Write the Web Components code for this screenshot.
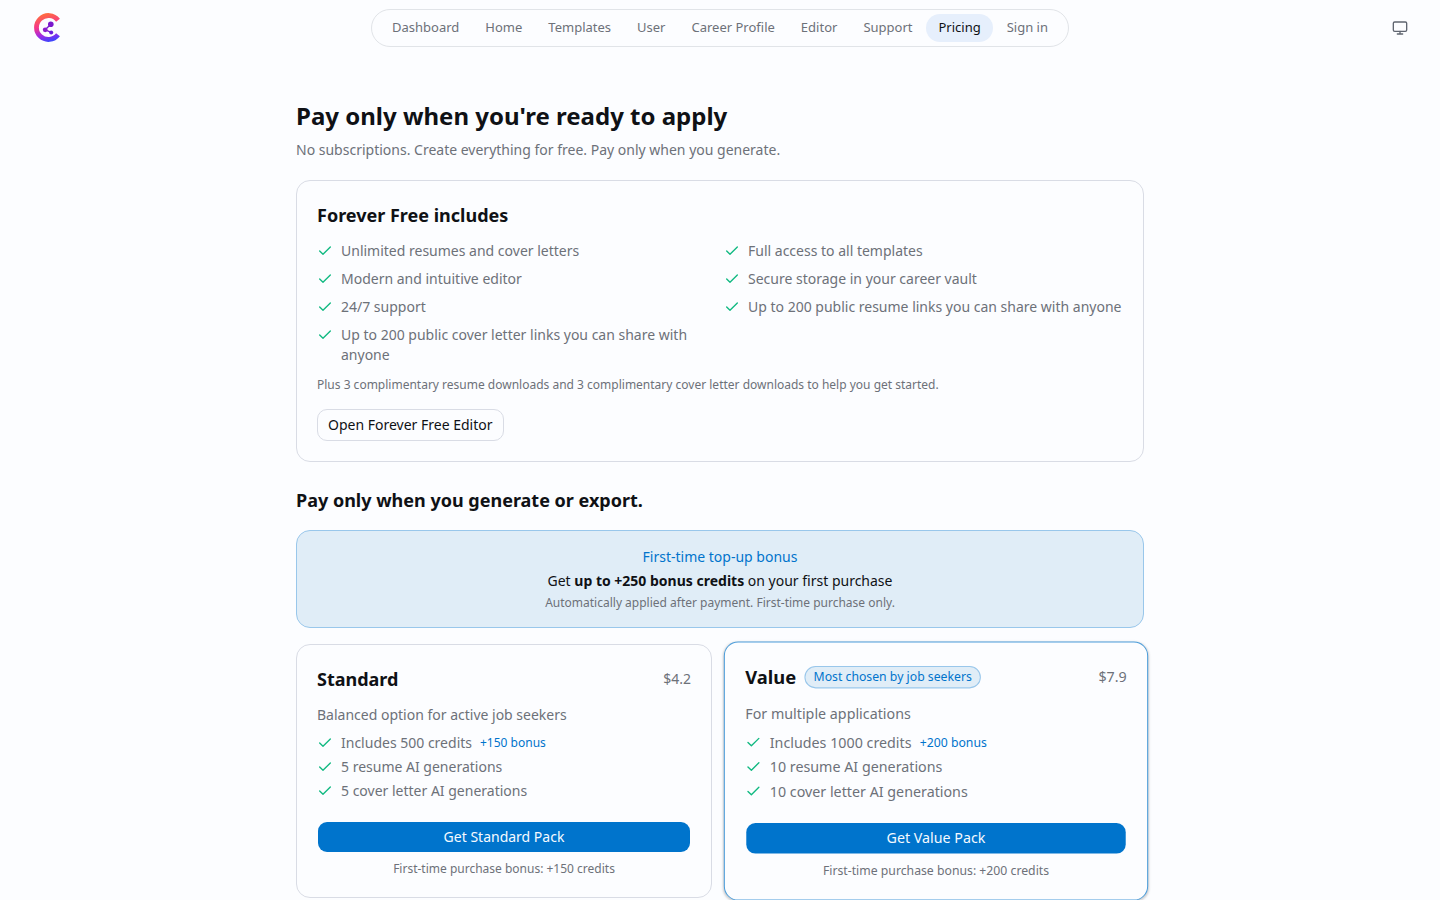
<!DOCTYPE html>
<html lang="en">
<head>
<meta charset="utf-8">
<meta name="viewport" content="width=device-width, initial-scale=1">
<title>Pricing</title>
<style>
    :root {
        --bg: #fcfdff;
        --text: #0f1115;
        --muted: #6d7179;
        --border: #d9dce5;
        --primary: #0074cc;
        --primary-soft: #e0edf7;
        --primary-line: #99c7eb;
        --success: #10b981;
    }

    body {
        margin: 0;
        background: var(--bg);
        color: var(--text);
        font: 14px/20px "Noto Sans", sans-serif;
    }
</style>
</head>
<body>
<site-header>
    <nav-link href="#dashboard">Dashboard</nav-link>
    <nav-link href="#home">Home</nav-link>
    <nav-link href="#templates">Templates</nav-link>
    <nav-link href="#user">User</nav-link>
    <nav-link href="#career-profile">Career Profile</nav-link>
    <nav-link href="#editor">Editor</nav-link>
    <nav-link href="#support">Support</nav-link>
    <nav-link href="#pricing" active>Pricing</nav-link>
    <nav-link href="#sign-in">Sign in</nav-link>
</site-header>

<pricing-page>
    <free-plan slot="free">
        <check-item>Unlimited resumes and cover letters</check-item>
        <check-item>Full access to all templates</check-item>
        <check-item>Modern and intuitive editor</check-item>
        <check-item>Secure storage in your career vault</check-item>
        <check-item>24/7 support</check-item>
        <check-item>Up to 200 public resume links you can share with anyone</check-item>
        <check-item>Up to 200 public cover letter links you can share with anyone</check-item>
    </free-plan>
    <bonus-banner slot="bonus"></bonus-banner>
    <price-card name="Standard" price="$4.2" bonus="150">
        <span slot="description">Balanced option for active job seekers</span>
        <check-item bonus="+150 bonus">Includes 500 credits</check-item>
        <check-item>5 resume AI generations</check-item>
        <check-item>5 cover letter AI generations</check-item>
    </price-card>
    <price-card name="Value" price="$7.9" bonus="200" badge="Most chosen by job seekers" featured>
        <span slot="description">For multiple applications</span>
        <check-item bonus="+200 bonus">Includes 1000 credits</check-item>
        <check-item>10 resume AI generations</check-item>
        <check-item>10 cover letter AI generations</check-item>
    </price-card>
</pricing-page>

<script>
class NavLink extends HTMLElement {
    constructor() {
        super()
        this.attachShadow({ mode: "open" })
    }

    connectedCallback() {
        this.shadowRoot.innerHTML = `
        <style>
            :host {
                display: block;
            }

            a {
                display: block;
                padding: 4px 12px 5px;
                border-radius: 14px;
                color: var(--muted);
                font-size: 13px;
                line-height: 19px;
                text-decoration: none;
                white-space: nowrap;
            }

            :host([active]) a {
                background: #e6effc;
                color: var(--text);
            }
        </style>
        <a href="${this.getAttribute("href")}" ${this.hasAttribute("active") ? 'aria-current="page"' : ""}><slot></slot></a>
        `
    }
}
customElements.define("nav-link", NavLink)

class SiteHeader extends HTMLElement {
    constructor() {
        super()
        this.attachShadow({ mode: "open" })
        this.shadowRoot.innerHTML = `
        <style>
            :host {
                display: block;
            }

            header {
                display: grid;
                grid-template-columns: 1fr auto 1fr;
                align-items: center;
                min-height: 56px;
                padding: 0 32px;
            }

            .logo {
                justify-self: start;
            }

            svg {
                display: block;
            }

            nav {
                display: flex;
                gap: 2px;
                padding: 4px 8px;
                border: 1px solid #e1e4e8;
                border-radius: 19px;
            }

            button {
                justify-self: end;
                padding: 0;
                border: 0;
                background: none;
                color: #5f6570;
                cursor: pointer;
            }
        </style>
        <header>
            <a class="logo" href="#" aria-label="Home page">
                <svg width="32" height="32" viewBox="0 0 32 32" fill="none">
                    <defs>
                        <linearGradient id="ring" x1="13" y1="2" x2="20" y2="30" gradientUnits="userSpaceOnUse">
                            <stop offset="0" stop-color="#ff6b40"/>
                            <stop offset=".4" stop-color="#f5368a"/>
                            <stop offset=".72" stop-color="#9a2be8"/>
                            <stop offset="1" stop-color="#2f48ff"/>
                        </linearGradient>
                    </defs>
                    <path d="M26 8.2A12 12 0 1 0 26 22.8" stroke="url(#ring)" stroke-width="4.8"/>
                    <path d="M18.8 12.3 13.2 17.8l6 2.6" stroke="#7a18cc" stroke-width="1.4"/>
                    <circle cx="18.8" cy="12.3" r="2.8" fill="#7a18cc"/>
                    <circle cx="13.2" cy="17.8" r="2.4" fill="#8a1ccc"/>
                    <circle cx="19.2" cy="20.4" r="2" fill="#6a1cdc"/>
                </svg>
            </a>
            <nav><slot></slot></nav>
            <button type="button" aria-label="Theme">
                <svg width="16" height="16" viewBox="0 0 24 24" fill="none" stroke="currentColor" stroke-width="2" stroke-linecap="round" stroke-linejoin="round">
                    <rect x="2" y="3" width="20" height="14" rx="2"/>
                    <path d="M8 21h8M12 17v4"/>
                </svg>
            </button>
        </header>
        `
    }
}
customElements.define("site-header", SiteHeader)

class CheckItem extends HTMLElement {
    constructor() {
        super()
        this.attachShadow({ mode: "open" })
    }

    connectedCallback() {
        const bonus = this.getAttribute("bonus")
        this.setAttribute("role", "listitem")

        this.shadowRoot.innerHTML = `
        <style>
            :host {
                display: flex;
                align-items: flex-start;
                gap: 8px;
                color: var(--muted);
            }

            svg {
                flex: none;
                margin-top: 2px;
                color: var(--success);
            }

            small {
                color: var(--primary);
                font-size: 12px;
            }
        </style>
        <svg width="16" height="16" viewBox="0 0 24 24" fill="none" stroke="currentColor" stroke-width="2" stroke-linecap="round" stroke-linejoin="round" aria-hidden="true">
            <path d="M20 6 9 17l-5-5"/>
        </svg>
        <span><slot></slot></span>
        ${bonus ? `<small>${bonus}</small>` : ""}
        `
    }
}
customElements.define("check-item", CheckItem)

class FreePlan extends HTMLElement {
    constructor() {
        super()
        this.attachShadow({ mode: "open" })
        this.shadowRoot.innerHTML = `
        <style>
            :host {
                display: block;
                padding: 20px;
                border: 1px solid var(--border);
                border-radius: 14px;
            }

            h2 {
                margin: 0 0 12px;
                font-size: 18px;
                line-height: 28px;
                font-weight: 700;
            }

            .list {
                display: grid;
                grid-template-columns: 1fr 1fr;
                gap: 8px;
            }

            p {
                margin: 12px 0 16px;
                color: var(--muted);
                font-size: 12px;
                line-height: 16px;
            }

            button {
                display: block;
                padding: 5px 10px;
                border: 1px solid var(--border);
                border-radius: 10px;
                background: var(--bg);
                color: var(--text);
                font: inherit;
                cursor: pointer;
            }
        </style>
        <h2>Forever Free includes</h2>
        <div class="list" role="list"><slot></slot></div>
        <p>Plus 3 complimentary resume downloads and 3 complimentary cover letter downloads to help you get started.</p>
        <button type="button">Open Forever Free Editor</button>
        `
    }
}
customElements.define("free-plan", FreePlan)

class BonusBanner extends HTMLElement {
    constructor() {
        super()
        this.attachShadow({ mode: "open" })
        this.shadowRoot.innerHTML = `
        <style>
            :host {
                display: flex;
                flex-direction: column;
                gap: 4px;
                padding: 16px;
                border: 1px solid var(--primary-line);
                border-radius: 14px;
                background: var(--primary-soft);
                text-align: center;
            }

            p {
                margin: 0;
            }

            .title {
                color: var(--primary);
            }

            b {
                font-weight: 700;
            }

            .note {
                color: var(--muted);
                font-size: 12px;
                line-height: 16px;
            }
        </style>
        <p class="title">First-time top-up bonus</p>
        <p>Get <b>up to +250 bonus credits</b> on your first purchase</p>
        <p class="note">Automatically applied after payment. First-time purchase only.</p>
        `
    }
}
customElements.define("bonus-banner", BonusBanner)

class PriceCard extends HTMLElement {
    constructor() {
        super()
        this.attachShadow({ mode: "open" })
    }

    connectedCallback() {
        const name = this.getAttribute("name")
        const badge = this.getAttribute("badge")

        this.shadowRoot.innerHTML = `
        <style>
            :host {
                display: block;
                padding: 20px;
                border: 1px solid var(--border);
                border-radius: 14px;
                background: var(--bg);
            }

            /* The recommended pack stands a little larger than the others */
            :host([featured]) {
                border-color: #4d9edb;
                box-shadow: 0 1px 3px rgba(0, 0, 0, 0.1), 0 1px 2px rgba(0, 0, 0, 0.1);
                transform: scale(1.02);
            }

            .head {
                display: flex;
                align-items: center;
                gap: 8px;
            }

            h3 {
                margin: 0;
                font-size: 18px;
                line-height: 28px;
                font-weight: 700;
            }

            .badge {
                padding: 2px 8px;
                border: 1px solid var(--primary-line);
                border-radius: 11px;
                background: var(--primary-soft);
                color: var(--primary);
                font-size: 12px;
                line-height: 16px;
            }

            .price {
                margin-left: auto;
                color: var(--muted);
            }

            .description {
                margin: 12px 0 8px;
                color: var(--muted);
            }

            .list {
                display: flex;
                flex-direction: column;
                gap: 4px;
            }

            button {
                display: block;
                width: 100%;
                margin-top: 20px;
                padding: 5px 10px;
                border: 1px solid transparent;
                border-radius: 10px;
                background: var(--primary);
                background-clip: padding-box;
                color: #f5faff;
                font: inherit;
                cursor: pointer;
            }

            .note {
                margin: 8px 0 0;
                color: var(--muted);
                font-size: 12px;
                line-height: 16px;
                text-align: center;
            }
        </style>
        <div class="head">
            <h3>${name}</h3>
            ${badge ? `<span class="badge">${badge}</span>` : ""}
            <span class="price">${this.getAttribute("price")}</span>
        </div>
        <p class="description"><slot name="description"></slot></p>
        <div class="list" role="list"><slot></slot></div>
        <button type="button">Get ${name} Pack</button>
        <p class="note">First-time purchase bonus: +${this.getAttribute("bonus")} credits</p>
        `
    }
}
customElements.define("price-card", PriceCard)

class PricingPage extends HTMLElement {
    constructor() {
        super()
        this.attachShadow({ mode: "open" })
        this.shadowRoot.innerHTML = `
        <style>
            :host {
                display: block;
            }

            main {
                max-width: 848px;
                margin: 0 auto;
                padding: 44px 24px;
            }

            h1 {
                margin: 0 0 8px;
                font-size: 24px;
                line-height: 32px;
                font-weight: 700;
            }

            .lead {
                margin: 0 0 20px;
                color: var(--muted);
            }

            h2 {
                margin: 24px 0 16px;
                font-size: 18px;
                line-height: 28px;
                font-weight: 700;
            }

            .packs {
                display: grid;
                grid-template-columns: 1fr 1fr;
                gap: 16px;
                margin-top: 16px;
            }
        </style>
        <main>
            <h1>Pay only when you're ready to apply</h1>
            <p class="lead">No subscriptions. Create everything for free. Pay only when you generate.</p>
            <slot name="free"></slot>
            <h2>Pay only when you generate or export.</h2>
            <slot name="bonus"></slot>
            <div class="packs"><slot></slot></div>
        </main>
        `
    }
}
customElements.define("pricing-page", PricingPage)
</script>
</body>
</html>
